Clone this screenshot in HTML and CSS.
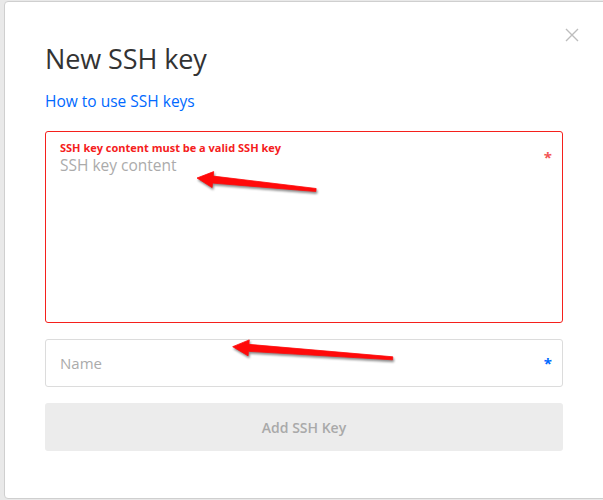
FILE: index.html
```html
<!DOCTYPE html>
<html>
<head>
<meta charset="utf-8">
<link rel="stylesheet" href="styles.css">
</head>
<body>
<div class="modal">
  <button class="close" aria-label="Close">
    <svg width="14" height="14" viewBox="0 0 14 14"><path d="M1 1 L13 13 M13 1 L1 13" stroke="#bdbdbd" stroke-width="1.4" fill="none"/></svg>
  </button>
  <h1 class="title">New SSH key</h1>
  <a class="help" href="#">How to use SSH keys</a>
  <div class="field field-area error">
    <div class="err-msg">SSH key content must be a valid SSH key</div>
    <div class="placeholder">SSH key content</div>
    <span class="req req-red">*</span>
  </div>
  <div class="field field-input">
    <div class="placeholder">Name</div>
    <span class="req req-blue">*</span>
  </div>
  <button class="submit">Add SSH Key</button>
</div>
<svg class="arrows" width="603" height="500" viewBox="0 0 603 500">
  <g class="arrow">
    <polygon points="197,178 213.7,171.6 213.25,176.1 316.15,188.5 315.85,191.5 212.55,183.1 212.1,187.6"/>
    <polygon points="232.7,346.7 249.24,339.88 248.91,344.37 392.81,356.8 392.59,359.8 248.41,351.35 248.08,355.84"/>
  </g>
</svg>
</body>
</html>
```

FILE: styles.css
```css
html, body {
  margin: 0;
  padding: 0;
}
body {
  width: 603px;
  height: 500px;
  overflow: hidden;
  background: #e9e9e9;
  font-family: "Open Sans", "Liberation Sans", sans-serif;
  position: relative;
}
.modal {
  position: relative;
  box-sizing: border-box;
  margin: 1px 0 0 4px;
  width: 620px;
  height: 498px;
  background: #fff;
  border: 1px solid #cfcfcf;
  border-radius: 4px;
  padding: 40px 0 0 40px;
}
.close {
  position: absolute;
  top: 26px;
  left: 560px;
  padding: 0;
  border: 0;
  background: none;
  width: 14px;
  height: 14px;
  display: block;
}
.close svg { display: block; }
.title {
  margin: 0;
  font-size: 27px;
  font-weight: 400;
  line-height: 34px;
  color: #333;
  letter-spacing: -0.1px;
}
.help {
  display: block;
  margin-top: 15px;
  font-size: 15.5px;
  line-height: 20px;
  color: #0069ff;
  text-decoration: none;
}
.field {
  position: relative;
  box-sizing: border-box;
  width: 518px;
  border: 1px solid #dcdcdc;
  border-radius: 3px;
  padding: 0 14px;
}
.field-area {
  margin-top: 20px;
  height: 192px;
  padding-top: 9px;
}
.field-area.error {
  border-color: #f5201c;
}
.err-msg {
  font-size: 11px;
  font-weight: 700;
  line-height: 14px;
  color: #f5201c;
}
.field-area .placeholder {
  font-size: 15.5px;
  line-height: 20px;
  color: #ababab;
}
.field-input {
  margin-top: 16px;
  height: 48px;
  display: flex;
  align-items: center;
}
.field-input .placeholder {
  font-size: 15px;
  color: #ababab;
}
.req {
  position: absolute;
  right: 10px;
  font-size: 15px;
  font-weight: 700;
  line-height: 1;
}
.req-red {
  top: 18px;
  color: #f25555;
}
.req-blue {
  top: 16px;
  color: #0069ff;
}
.submit {
  display: block;
  box-sizing: border-box;
  margin-top: 16px;
  width: 518px;
  height: 48px;
  border: 0;
  border-radius: 3px;
  background: #ececec;
  color: #a9a9a9;
  font-family: "Open Sans", "Liberation Sans", sans-serif;
  font-size: 14px;
  font-weight: 600;
  padding: 0;
}
.arrows {
  position: absolute;
  left: 0;
  top: 0;
  pointer-events: none;
}
.arrow polygon {
  fill: #ff0a0a;
  stroke: #ff0a0a;
  stroke-width: 0.8;
  stroke-linejoin: round;
}
.arrow {
  filter: drop-shadow(1px 2px 1.2px rgba(0,0,0,0.45));
}
```
